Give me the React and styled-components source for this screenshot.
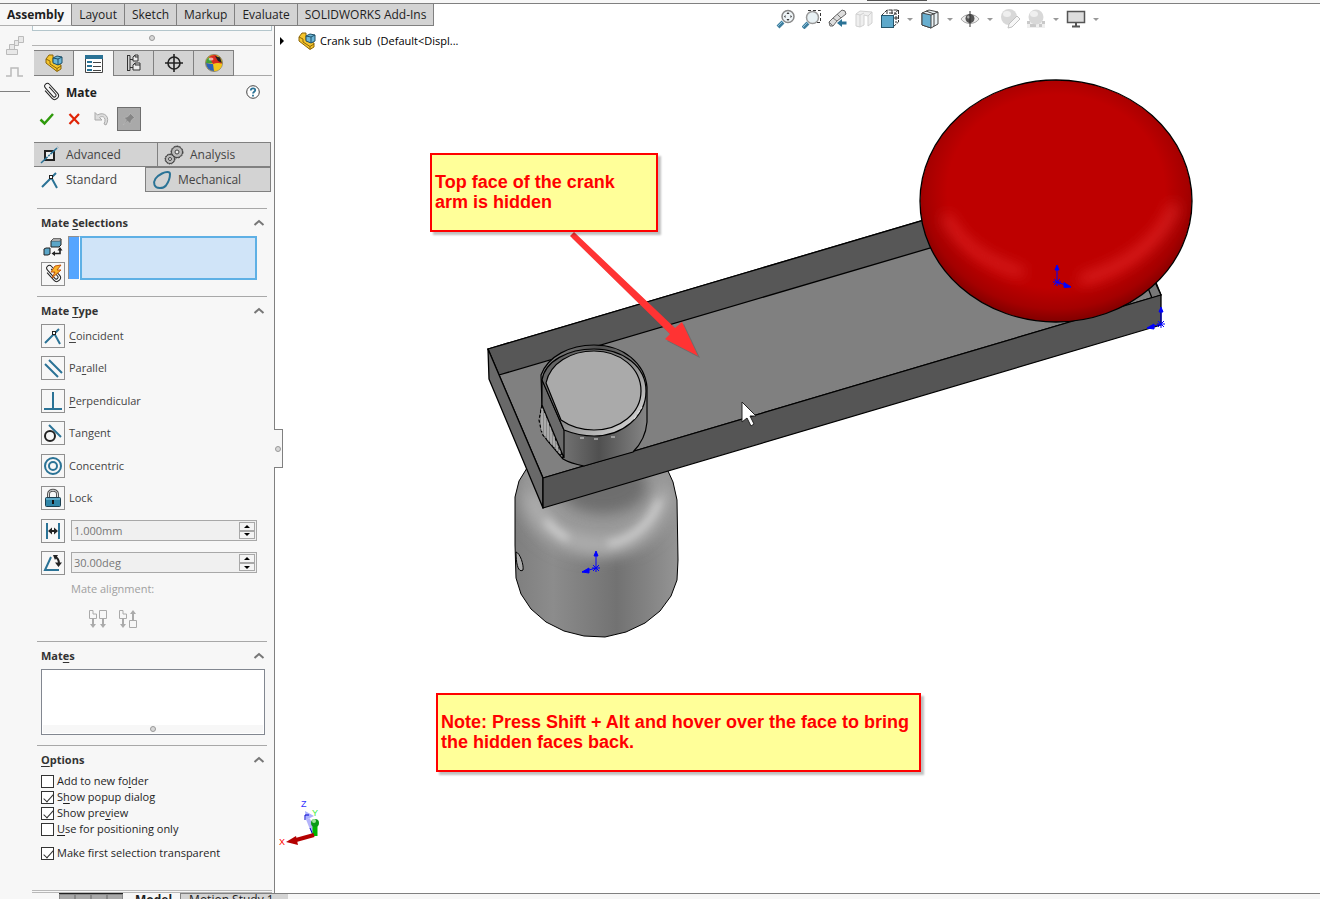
import React, { Component } from "react";
import styled, { createGlobalStyle } from "styled-components";

const GlobalStyle = createGlobalStyle`
* {
    box-sizing: border-box;
}
body {
    margin: 0;
    background: #f7f7f7;
    color: #1e1e1e;
    font-family: "Open Sans", "Noto Sans", sans-serif;
    font-size: 11px;
    line-height: 16px;
}
button, input {
    font: inherit;
    color: inherit;
    margin: 0;
    padding: 0;
}
u {
    text-underline-offset: 2px;
}
`;

const Page = styled.div`
display: flex;
flex-direction: column;
height: 100vh;
overflow: hidden;
`;

const Strip = styled.div`
height: 4px;
flex: none;
display: flex;
justify-content: flex-end;
padding-right: 393px;
border-bottom: 1px solid #808080;
background: #f7f7f7;
`;

const StripMark = styled.div`
width: 60px;
height: 1px;
background: #555;
`;

const Header = styled.header`
display: flex;
align-items: flex-start;
justify-content: space-between;
height: 22px;
flex: none;
background: #fff;
position: relative;
z-index: 2;
`;

const CommandTabs = styled.nav`
display: flex;
height: 22px;
`;

const CommandTab = styled.button`
height: 22px;
padding: 0 7px;
border: 0;
border-right: 1px solid #808080;
border-bottom: 1px solid ${props => (props.$active ? "#b0b0b0" : "#808080")};
background: ${props => (props.$active ? "#f7f7f7" : "#d3d3d3")};
font-size: 12px;
font-weight: ${props => (props.$active ? 700 : 400)};
white-space: nowrap;
`;

const ViewTools = styled.div`
display: flex;
padding-top: 5px;
margin-right: 214px;
`;

const ViewTool = styled.button`
display: block;
width: 20px;
height: 20px;
border: 0;
background: none;
opacity: ${props => (props.$dim ? 0.45 : 1)};
& + & {
    margin-left: 6px;
}
svg {
    display: block;
}
`;

const Caret = styled.button`
width: 20px;
height: 20px;
border: 0;
background: none;
display: flex;
align-items: center;
justify-content: center;
&::after {
    content: "";
    border: 3px solid transparent;
    border-top-color: #999;
    border-bottom: 0;
}
`;

const Main = styled.main`
display: flex;
flex: 1;
min-height: 0;
`;

const Rail = styled.aside`
width: 32px;
flex: none;
`;

const RailTools = styled.div`
display: flex;
flex-direction: column;
align-items: flex-end;
gap: 10px;
height: 66px;
padding: 10px 5px 0 0;
margin-right: 2px;
border-bottom: 1px solid #808080;
svg {
    display: block;
}
`;

const Panel = styled.section`
width: 243px;
flex: none;
display: flex;
flex-direction: column;
border-right: 1px solid #808080;
position: relative;
`;

const PanelTop = styled.div`
height: 5px;
margin-right: 2px;
border: 1px solid #b4c6cc;
border-top: 0;
background: #fbfdfd;
`;

const Grip = styled.div`
display: flex;
align-items: center;
justify-content: center;
height: 15px;
margin-right: 2px;
border-bottom: 1px solid #b4b4b4;
`;

const Dot = styled.span`
width: 6px;
height: 6px;
border: 1px solid #999;
border-radius: 50%;
background: #d8d8d8;
`;

const ManagerTabs = styled.div`
display: flex;
margin-top: 4px;
padding-left: 2px;
height: 26px;
&::after {
    content: "";
    flex: 1;
    margin-right: 2px;
    border-bottom: 1px solid #a8a8a8;
}
`;

const ManagerTab = styled.button`
display: flex;
align-items: center;
justify-content: center;
width: 40px;
border: solid #808080;
border-width: 1px 1px ${props => (props.$active ? 0 : 1)}px 0;
background: ${props => (props.$active ? "#f7f7f7" : "#d3d3d3")};
`;

const TitleRow = styled.div`
display: flex;
align-items: center;
height: 20px;
margin: 6px 14px 0 9px;
`;

const Title = styled.h1`
flex: 1;
margin: 2px 0 0 5px;
font-size: 12px;
font-weight: 700;
`;

const PlainButton = styled.button`
display: flex;
align-items: center;
justify-content: center;
border: 0;
background: none;
`;

const ActionRow = styled.div`
display: flex;
align-items: center;
gap: 11px;
height: 24px;
margin: 5px 0 11px 7px;
`;

const PinButton = styled(PlainButton)`
width: 24px;
height: 24px;
margin-left: -5px;
border: 1px solid #6e6e6e;
background: #a9a9a9;
`;

const MateTabs = styled.div`
display: grid;
grid-template-columns: ${props => props.$columns};
height: 25px;
margin: 0 3px 0 2px;
`;

const MateTab = styled.button`
display: flex;
align-items: center;
gap: 6px;
padding-left: 6px;
border: solid #808080;
border-width: ${props => (props.$active ? "0" : "1px 1px 1px 0")};
border-left-width: ${props => (props.$edge ? 1 : 0)}px;
background: ${props => (props.$active ? "#f7f7f7" : "#d3d3d3")};
color: #444;
font-size: 12px;
`;

const Section = styled.section`
margin: ${props => props.$top}px 7px 0 5px;
border-top: 1px solid #a8a8a8;
padding: 6px 2px 0 4px;
`;

const SectionHead = styled.div`
display: flex;
align-items: center;
justify-content: space-between;
height: 16px;
margin-bottom: 5px;
h2 {
    margin: 0;
    font-size: 11px;
    font-weight: 700;
    color: #333;
}
`;

const SelectionRow = styled.div`
display: flex;
margin-right: 8px;
`;

const SelectionTools = styled.div`
display: flex;
flex-direction: column;
gap: 2px;
width: 27px;
`;

const ToolButton = styled(PlainButton)`
width: 24px;
height: 24px;
border: ${props => (props.$flat ? "0" : "1px solid #909090")};
flex: none;
`;

const SelectionBar = styled.div`
width: 12px;
height: 43px;
border: solid #909090;
border-width: 1px 0 0 1px;
border-right: 1px solid #fff;
background: #55a5ff;
`;

const SelectionBox = styled.textarea`
flex: 1;
min-width: 0;
height: 44px;
padding: 2px;
border: 2px solid #5eb0e5;
outline: 0;
resize: none;
background: #d0e4f8;
`;

const MateList = styled.div`
display: flex;
flex-direction: column;
justify-content: space-between;
height: 251px;
`;

const MateRow = styled.div`
display: flex;
align-items: center;
gap: 4px;
label {
    color: #444;
}
`;

const Spin = styled.div`
display: flex;
flex: 1;
height: 21px;
margin: 0 8px 0 2px;
padding: 1px;
border: 1px solid #a8a8a8;
background: #f0f0f0;
input {
    flex: 1;
    min-width: 0;
    border: 0;
    padding-left: 1px;
    background: none;
    color: #777;
}
`;

const SpinButtons = styled.div`
display: flex;
flex-direction: column;
width: 16px;
button {
    flex: 1;
    min-height: 0;
    display: flex;
    align-items: center;
    justify-content: center;
    border: 1px solid #a8a8a8;
    background: #f4f4f4;
}
svg {
    display: block;
}
`;

const Alignment = styled.div`
margin: 6px 0 0 30px;
color: #a0a0a0;
`;

const AlignmentIcons = styled.div`
display: flex;
gap: 10px;
margin: 12px 0 0 17px;
`;

const MatesBox = styled.div`
display: flex;
flex-direction: column;
justify-content: flex-end;
height: 66px;
padding: 1px;
border: 1px solid #828790;
background: #fff;
div {
    display: flex;
    align-items: center;
    justify-content: center;
    height: 8px;
    background: #f7f7f7;
}
`;

const Option = styled.label`
display: flex;
align-items: center;
gap: 3px;
height: 16px;
margin-top: ${props => props.$gap || 0}px;
color: #1e1e1e;
`;

const Check = styled.input`
appearance: none;
position: relative;
width: 13px;
height: 13px;
border: 1px solid #333;
background: #fff;
&:checked::after {
    content: "";
    position: absolute;
    left: 4px;
    top: 0;
    width: 4px;
    height: 9px;
    border: solid #333;
    border-width: 0 1px 1px 0;
    transform: rotate(42deg);
}
`;

const PanelEnd = styled.div`
height: 3px;
margin: auto 2px 0 0;
border: solid #b8b8b8;
border-width: 1px 0;
`;

const Handle = styled.button`
position: absolute;
right: -9px;
top: 403px;
display: flex;
align-items: center;
justify-content: center;
width: 9px;
height: 39px;
border: 1px solid #808080;
border-left: 0;
background: #f7f7f7;
z-index: 1;
`;

const Viewport = styled.section`
flex: 1;
min-width: 0;
position: relative;
background: #fff;
`;

const Scene = styled.svg`
position: absolute;
inset: 0;
width: 100%;
height: 100%;
`;

const TreeNode = styled.button`
position: relative;
display: flex;
align-items: center;
gap: 4px;
margin: 6px 0 0 4px;
border: 0;
background: none;
color: #000;
white-space: pre;
svg:first-child {
    margin-right: 9px;
}
`;

const Callout = styled.p`
position: absolute;
left: ${props => props.$x}px;
top: ${props => props.$y}px;
width: ${props => props.$w}px;
margin: 0;
padding: 17px 8px 18px 3px;
border: 2px solid #f00;
background: #ff9;
box-shadow: 3px 3px 2px rgba(0, 0, 0, 0.25);
color: #f00;
font-family: "Liberation Sans", Arial, sans-serif;
font-size: 18px;
font-weight: 700;
line-height: 20px;
`;

const Footer = styled.footer`
display: flex;
align-items: flex-start;
height: 6px;
flex: none;
overflow: hidden;
padding-left: 32px;
&::after {
    content: "";
    flex: 1;
    border-top: 1px solid #808080;
}
`;

const FooterNav = styled.div`
display: flex;
margin-left: 27px;
border-top: 1px solid #222;
button {
    width: 16px;
    height: 16px;
    border: 1px solid #888;
    background: #a9a9a9;
}
`;

const FooterTab = styled.button`
height: 13px;
border: 0;
border-top: ${props => (props.$active ? "0" : "1px solid #808080")};
border-left: ${props => (props.$active ? "0" : "1px solid #808080")};
padding: 0 ${props => (props.$active ? 8 : 14)}px 0 ${props => (props.$active ? 12 : 8)}px;
background: ${props => (props.$active ? "#f7f7f7" : "#d3d3d3")};
font-size: 12px;
font-weight: ${props => (props.$active ? 700 : 400)};
line-height: 12px;
white-space: nowrap;
`;

const BLUE = "#2b7396";

const AssemblyIcon = () => (
    <svg width="18" height="18" viewBox="0 0 18 18">
        <path d="M1 5 4 1 8 1 8 8 16 11 16 15 12 17.500 1 9Z" fill="#f6c52c" stroke="#8a6508" />
        <path d="M1 5 5 7 5 10 12 14.500V17M12 14.500 16 12" fill="none" stroke="#8a6508" />
        <path d="M8 4 12 2 17 3 17 9 13 11 8 9Z" fill="#6db7d8" stroke="#1f5068" />
        <path d="M8 4 13 5 17 3M13 5V11" fill="none" stroke="#1f5068" />
    </svg>
);

const PropertyIcon = () => (
    <svg width="18" height="18" viewBox="0 0 18 18">
        <path d="M.5 .5H17.5V17.5H.5Z" fill="#fff" stroke="#444" />
        <path d="M0 0H18V4H0Z" fill={BLUE} />
        <path d="M2 6H7V8H2ZM2 10H7V12H2ZM2 14H7V16H2Z" fill={BLUE} />
        <path d="M8 7.500H16M8 11.500H16M8 15.500H16" stroke="#444" />
    </svg>
);

const ConfigIcon = () => (
    <svg width="16" height="18" viewBox="0 0 16 18" fill="none" stroke="#333">
        <path d="M1.500 1V17M1 1.500H4V16.500H1M4 5.500H7M4 13.500H7" />
        <path d="M7 3 9 1H12V7H7ZM9 1V3H12M7 11 9 9H14V16H7ZM9 9V11H14" fill="#eee" />
    </svg>
);

const TargetIcon = () => (
    <svg width="18" height="18" viewBox="0 0 18 18" fill="none" stroke="#222" strokeWidth="1.600">
        <circle cx="9" cy="9" r="6" />
        <path d="M9 0V18M0 9H18" />
    </svg>
);

const AppearanceIcon = () => (
    <svg width="18" height="18" viewBox="0 0 18 18">
        <circle cx="9" cy="9" r="8.500" fill="#f3c51c" stroke="#555" strokeWidth=".6" />
        <path d="M9 9 1 9A8 8 0 0 1 4 3Z" fill="#3f9f3c" />
        <path d="M8 10 4 3A9 9 0 0 1 11 1L17 10 13 9Z" fill="#d92b20" />
        <path d="M8 10 13 9 17 10A8 8 0 0 1 10 17Z" fill="#f3c51c" />
        <path d="M8 10 1 9A8 8 0 0 0 9 17Z" fill="#2b62ba" />
        <path d="M10 2 15 3.500 17 9 13 7Z" fill="#222" />
        <ellipse cx="6" cy="5" rx="2.500" ry="1.500" fill="#fff" opacity=".6" />
    </svg>
);

const ClipIcon = ({ bolt }) => (
    <svg width="20" height="20" viewBox="0 0 20 20" fill="none">
        <g transform="rotate(-42 10 10)" stroke="#222">
            <path d="M6.500 5V15.500C6.500 20 14 20 14 15.500V3.500C14 -.5 8.500 -.5 8.500 3.500V14.500C8.500 17 12 17 12 14.500V5" />
        </g>
        {bolt && <path d="M12 2 18 1 14 6H18L9 14 12 8H8Z" fill="#fbb62a" stroke="#c4560c" />}
    </svg>
);

const HelpIcon = () => (
    <svg width="14" height="14" viewBox="0 0 14 14" fill="none">
        <circle cx="7" cy="7" r="6.300" stroke="#444" fill="#fff" />
        <path d="M4.800 5.500C4.800 2.600 9.400 2.600 9.200 5.300 9 6.700 7 6.800 7 8.600M7 9.800V11.400" stroke={BLUE} strokeWidth="1.800" />
    </svg>
);

const UndoIcon = () => (
    <svg width="18" height="16" viewBox="0 0 18 16">
        <path d="M2 1.500V9H9L6.500 6.500C10 4 14 7 11 13L13 14C18 6 11 0 4.500 4Z" fill="#ddd" stroke="#aaa" />
    </svg>
);

const PinIcon = () => (
    <svg width="16" height="16" viewBox="0 0 16 16">
        <path d="M9 2 14 7 12 7.500 10 10 9.500 13 6.500 10 2 14 5.500 9 3 6.500 6 6 8.500 4Z" fill="#858585" stroke="#bbb" strokeWidth=".6" />
    </svg>
);

const CoincidentIcon = () => (
    <svg width="20" height="20" viewBox="0 0 20 20" fill="none" stroke={BLUE} strokeWidth="2">
        <path d="M2 17 16 3M11 7 17 18" />
        <rect x="9.500" y="5.500" width="3" height="3" fill="#fff" stroke="#222" strokeWidth="1" />
    </svg>
);

const AdvancedIcon = () => (
    <svg width="20" height="20" viewBox="0 0 20 20" fill="none">
        <rect x="5" y="6" width="9" height="9" fill="#eee" stroke="#222" strokeWidth="2" />
        <path d="M1 18 18 2" stroke={BLUE} strokeWidth="1.500" strokeDasharray="9 1 2 1" />
    </svg>
);

const AnalysisIcon = () => (
    <svg width="20" height="20" viewBox="0 0 20 20" stroke="#444" fill="#bbb">
        <circle cx="13" cy="7" r="5.500" strokeWidth="1" />
        <circle cx="13" cy="7" r="6" fill="none" strokeDasharray="2 1" />
        <circle cx="13" cy="7" r="2" fill="#eee" />
        <circle cx="6" cy="14" r="4.500" />
        <circle cx="6" cy="14" r="5" fill="none" strokeDasharray="1.500 1" />
        <circle cx="6" cy="14" r="1.500" fill="#eee" />
    </svg>
);

const CamIcon = () => (
    <svg width="20" height="20" viewBox="0 0 20 20" fill="none">
        <path d="M10 3.500C14 1.500 18 1.500 18 4C18 8 16.500 12 14 15.500C11 19 4 19 2.500 15C1 11 4 6.500 10 3.500Z" stroke={BLUE} strokeWidth="2" />
    </svg>
);

const SwapIcon = () => (
    <svg width="20" height="20" viewBox="0 0 20 20">
        <path d="M8 3 10 1H18V7L16 9H8Z" fill="#5ba6c8" stroke="#222" />
        <path d="M8 3 10 1H18L17 3Z" fill="#eee" stroke="#444" strokeWidth=".8" />
        <path d="M1 11 3 10H7V16L5 17H1Z" fill="#5ba6c8" stroke="#222" />
        <path d="M11 15.500H17V12" fill="none" stroke="#222" strokeWidth="1.600" />
        <path d="M17 9 14.500 12.500H19.500ZM8.500 15.500 12 13V18Z" fill="#222" />
    </svg>
);

const ParallelIcon = () => (
    <svg width="20" height="20" viewBox="0 0 20 20" stroke={BLUE} strokeWidth="2">
        <path d="M6 2 19 15M2 6 15 19" />
    </svg>
);

const PerpendicularIcon = () => (
    <svg width="20" height="20" viewBox="0 0 20 20" stroke={BLUE} strokeWidth="2">
        <path d="M10 1V18M1 18H19" />
    </svg>
);

const TangentIcon = () => (
    <svg width="20" height="20" viewBox="0 0 20 20" fill="none">
        <path d="M6 2 18 14" stroke={BLUE} strokeWidth="2" />
        <circle cx="7" cy="13" r="5" stroke="#222" strokeWidth="2" />
    </svg>
);

const ConcentricIcon = () => (
    <svg width="20" height="20" viewBox="0 0 20 20" fill="none" stroke={BLUE} strokeWidth="2">
        <circle cx="10" cy="10" r="8" />
        <circle cx="10" cy="10" r="4" />
    </svg>
);

const LockIcon = () => (
    <svg width="20" height="20" viewBox="0 0 20 20" fill="none">
        <path d="M5.500 10V6C5.500 1 14.500 1 14.500 6V10" stroke="#555" strokeWidth="3" />
        <path d="M5.500 10V6C5.500 1 14.500 1 14.500 6V10" stroke="#ddd" strokeWidth="1" />
        <rect x="2.500" y="9.500" width="15" height="9" rx="1" fill="#2f86a8" stroke="#1b3f50" />
        <path d="M3 11H17" stroke="#8ccbe2" />
        <path d="M10 12V16" stroke="#111" strokeWidth="2" />
    </svg>
);

const DistanceIcon = () => (
    <svg width="20" height="20" viewBox="0 0 20 20">
        <path d="M4 2V18M16 2V18" stroke={BLUE} strokeWidth="2" />
        <path d="M7 10H13" stroke="#222" strokeWidth="2" />
        <path d="M5 10 9 6.500V13.500ZM15 10 11 6.500V13.500Z" fill="#222" />
    </svg>
);

const AngleIcon = () => (
    <svg width="20" height="20" viewBox="0 0 20 20" fill="none">
        <path d="M8 4 2 17H16" stroke={BLUE} strokeWidth="2" />
        <path d="M12 4C15 5 16 8 16 11" stroke="#222" strokeWidth="2" />
        <path d="M10 2H15L12 7ZM12 9.500H19L15.500 14Z" fill="#222" />
    </svg>
);

const AlignIcon = ({ anti }) => (
    <svg width="20" height="20" viewBox="0 0 20 20" fill="none" stroke="#aaa">
        <path d="M1.500 1.500H5V5H8.500V9.500H1.500Z" />
        <path d="M5 10V16" strokeWidth="2" />
        <path d="M2 15H8L5 19Z" fill="#aaa" stroke="none" />
        {anti ? (
            <g>
                <path d="M11.500 11.500H18.500V18.500H11.500Z" />
                <path d="M15 11V4" strokeWidth="2" />
                <path d="M12 5H18L15 1Z" fill="#aaa" stroke="none" />
            </g>
        ) : (
            <g>
                <path d="M11.500 1.500H18.500V9.500H11.500Z" />
                <path d="M15 10V16" strokeWidth="2" />
                <path d="M12 15H18L15 19Z" fill="#aaa" stroke="none" />
            </g>
        )}
    </svg>
);

const ChevronIcon = () => (
    <svg width="12" height="8" viewBox="0 0 12 8" fill="none">
        <path d="M1.500 6 6 2 10.500 6" stroke="#777" strokeWidth="2" />
    </svg>
);

const viewIcons = {
    fit: (
        <g>
            <path d="M2 18 7 13" stroke="#3f7f9f" strokeWidth="4" />
            <path d="M2 17 7 12" stroke="#8fc3dc" />
            <circle cx="12" cy="7.500" r="6" fill="#eef4f7" stroke="#888" strokeWidth="1.500" />
            <path d="M12 3 13.500 5H10.500ZM12 12 13.500 10H10.500ZM8 7.500 9.500 6V9ZM16 7.500 14.500 6V9Z" fill="#333" />
        </g>
    ),
    area: (
        <g>
            <path d="M6 1.500H18.500V13.500H14" fill="none" stroke="#333" strokeDasharray="3 2" />
            <path d="M1 19 6 14" stroke="#3f7f9f" strokeWidth="4" />
            <path d="M1 18 6 13" stroke="#8fc3dc" />
            <circle cx="10.500" cy="8.500" r="6" fill="#e8f1f4" stroke="#999" strokeWidth="1.500" />
        </g>
    ),
    previous: (
        <g>
            <path d="M1 13 5 9 14 1 17 2 18 5 9 12 5 17 2 17Z" fill="#ddd" stroke="#666" />
            <path d="M5 9 9 12M9 5 13 9M1 13 5 17" fill="none" stroke="#777" />
            <path d="M18.500 14H13" stroke={BLUE} strokeWidth="3" />
            <path d="M9 14 14 10V18Z" fill={BLUE} />
        </g>
    ),
    section: (
        <g fill="#ddd" stroke="#999">
            <path d="M2 5 6 2 18 3V14L14 17V7L10 6V16L6 18 2 17Z" />
            <path d="M2 5 6 6V18M6 6 10 4M14 7 18 3" fill="none" />
        </g>
    ),
    orient: (
        <g fill="none" stroke="#333">
            <path d="M1 7 7 1H18.500V13L13 18M13 7 18 1M7 1V7M12 1V5M9 4H16V14M14 9H18" strokeDasharray="4 1" />
            <rect x="1.500" y="6.500" width="12" height="12" fill="#5ea9cb" stroke="#25566c" />
        </g>
    ),
    display: (
        <g stroke="#444">
            <path d="M2 4 9 1 18 3V15L11 19 2 16Z" fill="#e9f1f4" />
            <path d="M2 4 11 6V19L2 16Z" fill="#68afd0" />
            <path d="M11 6 18 3M6 2 14 5V17" fill="none" />
        </g>
    ),
    eye: (
        <g>
            <path d="M1 10C5 4 15 4 19 10 15 16 5 16 1 10Z" fill="#eee" stroke="#aaa" />
            <circle cx="10" cy="9.500" r="4.500" fill="#555" />
            <circle cx="8.500" cy="8" r="1.500" fill="#aaa" />
            <path d="M10 2V18" stroke="#333" />
        </g>
    ),
    edit: (
        <g>
            <circle cx="9" cy="8" r="8" fill="#aaa" />
            <ellipse cx="7" cy="5" rx="4" ry="3" fill="#ddd" />
            <path d="M9 15 17 7 20 10 12 18 8 19Z" fill="#eee" stroke="#777" />
        </g>
    ),
    scene: (
        <g>
            <path d="M1 12H19V19H1Z" fill="#ddd" />
            <path d="M1 12H4V15H1ZM7 15H10V18H7ZM13 15H16V18H13ZM16 12H19V15H16ZM4 15H7V18H4Z" fill="#888" />
            <circle cx="10" cy="8" r="7.500" fill="#aaa" />
            <ellipse cx="8" cy="5" rx="4" ry="3" fill="#ddd" />
        </g>
    ),
    monitor: (
        <g>
            <rect x="1.500" y="2.500" width="17" height="11" fill="#ddd" stroke="#555" strokeWidth="1.500" />
            <path d="M10 14V17M6 17.500H14" stroke="#555" strokeWidth="2" />
        </g>
    )
};

const commandTabs = ["Assembly", "Layout", "Sketch", "Markup", "Evaluate", "SOLIDWORKS Add-Ins"];

const viewTools = [
    { name: "fit", label: "Zoom to Fit" },
    { name: "area", label: "Zoom to Area" },
    { name: "previous", label: "Previous View" },
    { name: "section", label: "Section View", dim: true },
    { name: "orient", label: "View Orientation", menu: true },
    { name: "display", label: "Display Style", menu: true },
    { name: "eye", label: "Hide/Show Items", menu: true },
    { name: "edit", label: "Edit Appearance", dim: true },
    { name: "scene", label: "Apply Scene", dim: true, menu: true },
    { name: "monitor", label: "View Settings", menu: true }
];

const managerTabs = [
    { label: "FeatureManager", icon: <AssemblyIcon /> },
    { label: "PropertyManager", icon: <PropertyIcon />, active: true },
    { label: "ConfigurationManager", icon: <ConfigIcon /> },
    { label: "DimXpertManager", icon: <TargetIcon /> },
    { label: "DisplayManager", icon: <AppearanceIcon /> }
];

const mateTypes = [
    { id: "coincident", label: <><u>C</u>oincident</>, icon: <CoincidentIcon /> },
    { id: "parallel", label: <>Pa<u>r</u>allel</>, icon: <ParallelIcon /> },
    { id: "perpendicular", label: <><u>P</u>erpendicular</>, icon: <PerpendicularIcon /> },
    { id: "tangent", label: "Tangent", icon: <TangentIcon /> },
    { id: "concentric", label: "Concentric", icon: <ConcentricIcon /> },
    { id: "lock", label: "Lock", icon: <LockIcon /> }
];

const values = [
    { id: "Distance", value: "1.000mm", icon: <DistanceIcon /> },
    { id: "Angle", value: "30.00deg", icon: <AngleIcon /> }
];

const options = [
    { id: "folder", label: <>Add to new fo<u>l</u>der</> },
    { id: "popup", label: <>S<u>h</u>ow popup dialog</>, checked: true },
    { id: "preview", label: <>Show pre<u>v</u>iew</>, checked: true },
    { id: "positioning", label: <><u>U</u>se for positioning only</> },
    { id: "transparent", label: "Make first selection transparent", checked: true, gap: 8 }
];

const Origin = ({ x, y, dx, dy }) => (
    <g stroke="#00f" fill="#00f" transform={`translate(${x} ${y})`}>
        <path d={`M0 0V-14M0 0L${dx} ${dy}M-4 0H4M-3 -3 3 3M-3 3 3 -3M0 0V4`} fill="none" />
        <path d="M-2 -12 0 -17 2 -12Z" />
        <path d={`M${dx} ${dy}L${dx / 2} ${dy / 2 - 2}L${dx / 2} ${dy / 2 + 3}Z`} />
    </g>
);

const Model = () => (
    <Scene viewBox="275 26 1045 867" preserveAspectRatio="xMinYMin meet" role="img" aria-label="Crank assembly">
        <defs>
            <linearGradient id="body" x1="0" x2="1">
                <stop offset="0" stopColor="#7d7d7d" />
                <stop offset=".25" stopColor="#8c8c8c" />
                <stop offset=".62" stopColor="#727272" />
                <stop offset=".8" stopColor="#838383" />
                <stop offset="1" stopColor="#979797" />
            </linearGradient>
            <linearGradient id="boss" x1="0" x2="1">
                <stop offset="0" stopColor="#888" />
                <stop offset=".55" stopColor="#505050" />
                <stop offset="1" stopColor="#858585" />
            </linearGradient>
            <linearGradient id="rim" x1="0" y1="0" x2="1" y2="1">
                <stop offset="0" stopColor="#555" />
                <stop offset=".5" stopColor="#888" />
                <stop offset=".85" stopColor="#ccc" />
                <stop offset="1" stopColor="#aaa" />
            </linearGradient>
            <radialGradient id="knob" cx=".5" cy=".46" r=".54">
                <stop offset="0" stopColor="#be0000" />
                <stop offset=".74" stopColor="#be0000" />
                <stop offset=".9" stopColor="#a40000" />
                <stop offset="1" stopColor="#800000" />
            </radialGradient>
            <filter id="soft" filterUnits="userSpaceOnUse" x="275" y="26" width="1045" height="867">
                <feGaussianBlur stdDeviation="7" />
            </filter>
            <filter id="softer" filterUnits="userSpaceOnUse" x="275" y="26" width="1045" height="867">
                <feGaussianBlur stdDeviation="4" />
            </filter>
            <clipPath id="bodyClip">
                <path d="M527 468 519 481 515 497 515 545 516 578 521 594 531 609 546 622 564 631 584 636 605 637 626 632 645 623 660 611 671 596 677 580 678 560 677 500 673 482 668 471Z" />
            </clipPath>
            <clipPath id="knobClip">
                <ellipse cx="1056" cy="201" rx="136" ry="121" />
            </clipPath>
        </defs>

        <g clipPath="url(#bodyClip)">
            <rect x="510" y="460" width="172" height="180" fill="url(#body)" />
            <ellipse cx="597" cy="492" rx="80" ry="66" fill="#989898" filter="url(#soft)" />
            <path d="M532 494C540 532 572 545 603 545 634 544 658 522 664 490" fill="none" stroke="#b0b0b0" strokeWidth="14" filter="url(#soft)" />
            <path d="M546 520C553 530 560 535 568 539M608 544C634 540 652 522 659 500" fill="none" stroke="#dadada" strokeWidth="5" filter="url(#softer)" />
            <ellipse cx="603" cy="486" rx="44" ry="28" fill="#6e6e6e" filter="url(#soft)" />
        </g>
        <path
            d="M527 468 519 481 515 497 515 545 516 578 521 594 531 609 546 622 564 631 584 636 605 637 626 632 645 623 660 611 671 596 677 580 678 560 677 500 673 482 668 471"
            fill="none"
            stroke="#000"
        />
        <path d="M516 552C520 553 524 565 523 570 519 573 516 566 516 552Z" fill="#aaa" stroke="#000" />

        <g stroke="#000" strokeLinejoin="round" strokeWidth="1.300">
            <path d="M488 349 1100 168 1155 280 1161 295 543 478Z" fill="#808080" />
            <path d="M488 349 1100 168 1127 190 499 375Z" fill="#575757" />
            <path d="M1148 288 1154 280 1161 295 1152 298Z" fill="#777" />
            <path d="M488 349 543 478 543 508 489 379Z" fill="#696969" />
            <path d="M543 478 1161 295 1161 325 543 508Z" fill="#555" />
        </g>

        <g stroke="#000" strokeWidth="1.200">
            <path d="M541 375C548 356 570 345 594 345 624 345 645 364 647 387V422C646 434 641 444 633 452L584 466C574 464 568 462 563 459L547 440C539 430 539 418 542 405Z" fill="url(#boss)" />
            <path d="M542 405 539 420 542 434 563 458Z" fill="#888" strokeDasharray="3 2" />
            <path d="M542 409V431M545 413V436M548 419V440M551 426V444M554 432V447M557 439V451M560 446V454" stroke="#ccc" strokeWidth="1" />
            <path d="M542 379 564 430V458L542 405Z" fill="#6b6b6b" />
            <path d="M542 380C545 361 568 349 594 349 624 349 646 367 646 391 646 417 622 436 594 436 584 436 574 434 564 430Z" fill="url(#rim)" />
            <path d="M546 383C550 363 571 351 594 351 620 351 641 368 641 391 641 413 620 430 594 430 582 430 571 427 561 420Z" fill="#aaa" />
            <path d="M580 438H586M594 439H600M611 437H616M634 419 642 407" stroke="#ddd" strokeDasharray="4 2" />
        </g>

        <g clipPath="url(#knobClip)">
            <ellipse cx="1056" cy="201" rx="136" ry="121" fill="url(#knob)" />
            <path d="M945 215C958 241 984 262 1024 273" fill="none" stroke="#f03a3a" strokeWidth="9" opacity=".6" filter="url(#soft)" />
            <path d="M1080 280C1124 269 1162 241 1175 204" fill="none" stroke="#f03a3a" strokeWidth="10" opacity=".6" filter="url(#soft)" />
        </g>
        <ellipse cx="1056" cy="201" rx="136" ry="121" fill="none" stroke="#000" strokeWidth="1.300" />

        <Origin x={1057} y={282} dx={14} dy={5} />
        <Origin x={1161} y={324} dx={-14} dy={4} />
        <Origin x={596} y={568} dx={-14} dy={4} />

        <path d="M574 233 675 328 682 322 698 356 665 339 670 334 570 236Z" fill="#333" opacity=".25" transform="translate(2 2)" />
        <path d="M574 232 675 328 682 322 698 356 665 339 670 334 570 236Z" fill="#f33" />

        <path d="M742 402V422L747 418 751 426 754 424 750 416H756Z" fill="#fff" stroke="#222" />

        <g fontFamily="Liberation Sans, Arial, sans-serif" fontSize="9">
            <path d="M314 834 308 819" stroke="#b4b4fa" strokeWidth="4" />
            <path d="M305 811 314 816 306 820Z" fill="#aab0ff" />
            <path d="M305 820V815H309M313 835 310 828" fill="none" stroke="#00c" />
            <path d="M315 836V822" stroke="#00b400" strokeWidth="5" />
            <circle cx="315" cy="823" r="4" fill="#0a9a18" />
            <circle cx="314" cy="821" r="2" fill="#9be69b" />
            <path d="M314 835 296 840" stroke="#b40000" strokeWidth="4" />
            <path d="M286 842 296 836 298 845Z" fill="#b40000" />
            <text x="279" y="845" fill="#f00">X</text>
            <text x="312" y="816" fill="#4e4">Y</text>
            <text x="301" y="807" fill="#33f">Z</text>
        </g>
    </Scene>
);

const Head = ({ children }) => (
    <SectionHead>
        <h2>{children}</h2>
        <PlainButton aria-label="Collapse">
            <ChevronIcon />
        </PlainButton>
    </SectionHead>
);

export default class App extends Component {
    state = {
        checked: options.reduce((all, o) => ({ ...all, [o.id]: !!o.checked }), {})
    };

    toggle(id) {
        this.setState(({ checked }) => ({ checked: { ...checked, [id]: !checked[id] } }));
    }

    render() {
        return (
            <Page>
                <GlobalStyle />
                <Strip>
                    <StripMark />
                </Strip>
                <Header>
                    <CommandTabs>
                        {commandTabs.map((tab, i) => (
                            <CommandTab key={tab} $active={i === 0}>{tab}</CommandTab>
                        ))}
                    </CommandTabs>
                    <ViewTools>
                        {viewTools.map(tool => (
                            <React.Fragment key={tool.name}>
                                <ViewTool aria-label={tool.label} $dim={tool.dim}>
                                    <svg width="20" height="20" viewBox="0 0 20 20">{viewIcons[tool.name]}</svg>
                                </ViewTool>
                                {tool.menu && <Caret aria-label={`${tool.label} menu`} />}
                            </React.Fragment>
                        ))}
                    </ViewTools>
                </Header>

                <Main>
                    <Rail>
                        <RailTools>
                            <svg width="20" height="20" viewBox="0 0 20 20" fill="#e8e8e8" stroke="#bbb">
                                <path d="M1.500 13.500H12.500V18.500H1.500ZM4.500 8.500H9.500V13.500H4.500ZM9.500 4.500H13.500V9.500H9.500ZM13.500 .5H18.500V6.500H13.500Z" />
                            </svg>
                            <svg width="20" height="12" viewBox="0 0 20 12" fill="none" stroke="#bbb" strokeWidth="1.500">
                                <path d="M1 10H6V2H13V10H18" />
                            </svg>
                        </RailTools>
                    </Rail>

                    <Panel>
                        <PanelTop />
                        <Grip><Dot /></Grip>
                        <ManagerTabs>
                            {managerTabs.map(tab => (
                                <ManagerTab key={tab.label} aria-label={tab.label} $active={tab.active}>{tab.icon}</ManagerTab>
                            ))}
                        </ManagerTabs>
                        <TitleRow>
                            <ClipIcon />
                            <Title>Mate</Title>
                            <PlainButton aria-label="Help"><HelpIcon /></PlainButton>
                        </TitleRow>
                        <ActionRow>
                            <PlainButton aria-label="OK">
                                <svg width="16" height="14" viewBox="0 0 16 14" fill="none">
                                    <path d="M1.500 7.500 5.500 11.500 14 2" stroke="#2f9a0c" strokeWidth="2.500" />
                                </svg>
                            </PlainButton>
                            <PlainButton aria-label="Cancel">
                                <svg width="16" height="14" viewBox="0 0 16 14" fill="none">
                                    <path d="M3.500 2 13 12M13 2 3.500 12" stroke="#e02406" strokeWidth="2.200" />
                                </svg>
                            </PlainButton>
                            <PlainButton aria-label="Undo"><UndoIcon /></PlainButton>
                            <PinButton aria-label="Keep visible"><PinIcon /></PinButton>
                        </ActionRow>
                        <MateTabs $columns="124px 1fr">
                            <MateTab><AdvancedIcon />Advanced</MateTab>
                            <MateTab><AnalysisIcon />Analysis</MateTab>
                        </MateTabs>
                        <MateTabs $columns="111px 1fr">
                            <MateTab $active><CoincidentIcon />Standard</MateTab>
                            <MateTab $edge><CamIcon />Mechanical</MateTab>
                        </MateTabs>

                        <Section $top={16}>
                            <Head>Mate <u>S</u>elections</Head>
                            <SelectionRow>
                                <SelectionTools>
                                    <ToolButton $flat aria-label="Entities to mate"><SwapIcon /></ToolButton>
                                    <ToolButton aria-label="Multiple mate mode"><ClipIcon bolt /></ToolButton>
                                </SelectionTools>
                                <SelectionBar />
                                <SelectionBox aria-label="Mate selections" readOnly />
                            </SelectionRow>
                        </Section>

                        <Section $top={10}>
                            <Head>Mate <u>T</u>ype</Head>
                            <MateList>
                                {mateTypes.map(mate => (
                                    <MateRow key={mate.id}>
                                        <ToolButton id={mate.id}>{mate.icon}</ToolButton>
                                        <label htmlFor={mate.id}>{mate.label}</label>
                                    </MateRow>
                                ))}
                                {values.map(row => (
                                    <MateRow key={row.id}>
                                        <ToolButton aria-label={row.id}>{row.icon}</ToolButton>
                                        <Spin>
                                            <input aria-label={`${row.id} value`} defaultValue={row.value} disabled />
                                            <SpinButtons>
                                                <button aria-label="Increase">
                                                    <svg width="6" height="3"><path d="M0 3 3 0 6 3Z" /></svg>
                                                </button>
                                                <button aria-label="Decrease">
                                                    <svg width="6" height="3"><path d="M0 0H6L3 3Z" /></svg>
                                                </button>
                                            </SpinButtons>
                                        </Spin>
                                    </MateRow>
                                ))}
                            </MateList>
                            <Alignment>
                                Mate alignment:
                                <AlignmentIcons>
                                    <AlignIcon />
                                    <AlignIcon anti />
                                </AlignmentIcons>
                            </Alignment>
                        </Section>

                        <Section $top={12}>
                            <Head>Mat<u>e</u>s</Head>
                            <MatesBox>
                                <div><Dot /></div>
                            </MatesBox>
                        </Section>

                        <Section $top={10}>
                            <Head><u>O</u>ptions</Head>
                            {options.map(o => (
                                <Option key={o.id} $gap={o.gap}>
                                    <Check type="checkbox" checked={this.state.checked[o.id]} onChange={() => this.toggle(o.id)} />
                                    <span>{o.label}</span>
                                </Option>
                            ))}
                        </Section>
                        <PanelEnd />
                        <Handle aria-label="Collapse panel"><Dot /></Handle>
                    </Panel>

                    <Viewport>
                        <Model />
                        <TreeNode>
                            <svg width="6" height="8" viewBox="0 0 6 8"><path d="M1 0 5 4 1 8Z" /></svg>
                            <AssemblyIcon />
                            {"Crank sub  (Default<Displ..."}
                        </TreeNode>
                        <Callout $x={155} $y={127} $w={228}>Top face of the crank arm is hidden</Callout>
                        <Callout $x={161} $y={667} $w={485}>
                            Note: Press Shift + Alt and hover over the face to bring the hidden faces back.
                        </Callout>
                    </Viewport>
                </Main>

                <Footer>
                    <FooterNav>
                        <button aria-label="First" />
                        <button aria-label="Previous" />
                        <button aria-label="Next" />
                        <button aria-label="Last" />
                    </FooterNav>
                    <FooterTab $active>Model</FooterTab>
                    <FooterTab>Motion Study 1</FooterTab>
                </Footer>
            </Page>
        );
    }
}
